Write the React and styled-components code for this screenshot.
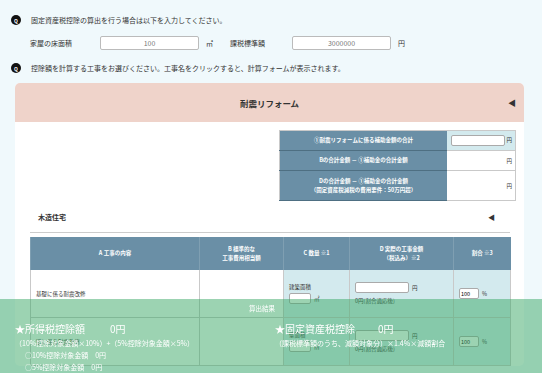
import React from "react";
import styled, { createGlobalStyle } from "styled-components";

const GlobalStyle = createGlobalStyle`
  body {
    margin: 0;
    background: #f0f9fc;
    font-family: "Noto Sans CJK JP", "Noto Sans", sans-serif;
    color: #333;
  }
`;

/**
 * Styling
 */

const Page = styled.div`
  padding: 15px 0 80px 0;
`;

const QuestionRow = styled.div`
  align-items: center;
  display: flex;
  font-size: 7px;
  gap: 10px;
  height: 10px;
  margin-left: 11px;
`;

const QIcon = styled.span`
  align-items: center;
  background: #111;
  border-radius: 50%;
  color: #fff;
  display: flex;
  font-size: 5px;
  font-weight: bold;
  height: 10px;
  justify-content: center;
  width: 10px;
`;

const InputRow = styled.div`
  align-items: center;
  display: flex;
  font-size: 7px;
  height: 14px;
  margin: 11px 0 13px 30px;
`;

const InputLabel = styled.span`
  width: ${(p) => p.width}px;
`;

const TopInput = styled.input`
  border: 1px solid #bbb;
  border-radius: 2px;
  box-sizing: border-box;
  color: #777;
  font-family: inherit;
  font-size: 7px;
  height: 14px;
  padding: 0;
  text-align: center;
  width: 99px;
`;

const Unit = styled.span`
  margin-left: ${(p) => p.gap || 3}px;
  width: ${(p) => p.width || "auto"};
`;

const Card = styled.div`
  background: #fff;
  border-radius: 5px;
  margin: 10px 18px 0 15px;
  overflow: hidden;
`;

const CardHeader = styled.div`
  align-items: center;
  background: #efd3ca;
  display: flex;
  font-size: 8.5px;
  font-weight: bold;
  height: 39px;
  justify-content: center;
  position: relative;
`;

const Arrow = styled.span`
  font-size: 8px;
  position: absolute;
  right: ${(p) => p.right}px;
`;

const CardBody = styled.div`
  padding: 8px 0 0 0;
`;

const SummaryTable = styled.table`
  border-collapse: collapse;
  border: 1px solid #c9c9c9;
  font-size: 5.5px;
  margin: 0 8px 0 auto;
  width: 237px;
`;

const SumHead = styled.th`
  background: #6a8fa6;
  border-bottom: 1px solid #4e6f82;
  color: #fff;
  font-weight: bold;
  height: ${(p) => p.h}px;
  line-height: 9px;
  padding: 0;
  text-align: center;
  width: 167px;
`;

const SumCell = styled.td`
  background: ${(p) => (p.tint ? "#d3eaee" : "#fff")};
  border-bottom: 1px solid #c9c9c9;
  padding: 0 3px;
  text-align: right;
  white-space: nowrap;
`;

const SmallInput = styled.input`
  border: 1px solid #aaa;
  border-radius: 2px;
  box-sizing: border-box;
  font-family: inherit;
  font-size: 5.5px;
  height: 11px;
  padding: 0 1px;
  vertical-align: middle;
  width: ${(p) => p.w}px;
`;

const SubHeader = styled.div`
  align-items: center;
  border-bottom: 1px solid #ccc;
  display: flex;
  font-size: 7px;
  font-weight: bold;
  height: 31px;
  margin: 0 14px 0 15px;
  padding: 0 15px 0 8px;
  justify-content: space-between;
`;

const WorkTable = styled.table`
  border-collapse: collapse;
  font-size: 5.5px;
  margin: 4px 14px 0 15px;
  table-layout: fixed;
  width: 480px;
`;

const HeadCell = styled.th`
  background: #6a8fa6;
  border-left: 1px solid #7f9fb2;
  color: #fff;
  font-weight: bold;
  height: 33px;
  line-height: 9px;
  padding: 0;
  text-align: center;
`;

const BodyCell = styled.td`
  background: ${(p) => (p.tint ? "#d3eaee" : "#fff")};
  border: 1px solid #c9c9c9;
  border-top: none;
  height: 47px;
  padding: 0 5px;
  text-align: ${(p) => p.align || "left"};
  vertical-align: middle;
`;

const CellLine = styled.div`
  align-items: center;
  display: flex;
  gap: 3px;
  margin-top: ${(p) => p.mt || 0}px;
`;

const ResultPanel = styled.div`
  background: rgba(58, 168, 102, 0.5);
  bottom: 0;
  color: #fff;
  height: 74px;
  left: 0;
  position: fixed;
  right: 0;
`;

const ResultTitle = styled.div`
  font-size: 6.5px;
  line-height: 9px;
  padding-top: 5px;
  text-align: center;
  width: 524px;
`;

const ResultColumns = styled.div`
  display: grid;
  grid-template-columns: 260px 1fr;
  margin: 9px 0 0 15px;
`;

const BigLine = styled.div`
  align-items: center;
  display: flex;
  font-size: 10px;
  height: 14px;
  line-height: 14px;
  margin-bottom: 1px;
`;

const BigLabel = styled.span`
  width: ${(p) => p.w}px;
`;

const Note = styled.div`
  font-size: 7px;
  height: 12px;
  line-height: 12px;
  margin-left: ${(p) => p.indent || 0}px;
  white-space: nowrap;
`;

function App() {
  return (
    <Page>
      <GlobalStyle />
      <QuestionRow>
        <QIcon>Q</QIcon>
        固定資産税控除の算出を行う場合は以下を入力してください。
      </QuestionRow>
      <InputRow>
        <InputLabel width={70}>家屋の床面積</InputLabel>
        <TopInput defaultValue="100" />
        <Unit gap={7} width="24px">㎡</Unit>
        <InputLabel width={62}>課税標準額</InputLabel>
        <TopInput defaultValue="3000000" />
        <Unit gap={7}>円</Unit>
      </InputRow>
      <QuestionRow>
        <QIcon>Q</QIcon>
        控除額を計算する工事をお選びください。工事名をクリックすると、計算フォームが表示されます。
      </QuestionRow>

      <Card>
        <CardHeader>
          耐震リフォーム
          <Arrow right={8}>◀</Arrow>
        </CardHeader>
        <CardBody>
          <SummaryTable>
            <tbody>
              <tr>
                <SumHead h={19}>①耐震リフォームに係る補助金額の合計</SumHead>
                <SumCell tint>
                  <SmallInput w={54} /> 円
                </SumCell>
              </tr>
              <tr>
                <SumHead h={19}>Bの合計金額 － ①補助金の合計金額</SumHead>
                <SumCell>円</SumCell>
              </tr>
              <tr>
                <SumHead h={29}>
                  Dの合計金額 － ①補助金の合計金額
                  <br />
                  （固定資産税減税の費用要件：50万円超）
                </SumHead>
                <SumCell>円</SumCell>
              </tr>
            </tbody>
          </SummaryTable>

          <SubHeader>
            木造住宅
            <span>◀</span>
          </SubHeader>

          <WorkTable>
            <colgroup>
              <col style={{ width: 169 }} />
              <col style={{ width: 84 }} />
              <col style={{ width: 66 }} />
              <col style={{ width: 104 }} />
              <col style={{ width: 57 }} />
            </colgroup>
            <thead>
              <tr>
                <HeadCell>A 工事の内容</HeadCell>
                <HeadCell>
                  B 標準的な
                  <br />
                  工事費用相当額
                </HeadCell>
                <HeadCell>C 数量 ※1</HeadCell>
                <HeadCell>
                  D 実際の工事金額
                  <br />
                  （税込み）※2
                </HeadCell>
                <HeadCell>割合 ※3</HeadCell>
              </tr>
            </thead>
            <tbody>
              <tr>
                <BodyCell>基礎に係る耐震改修</BodyCell>
                <BodyCell />
                <BodyCell tint>
                  <div>建築面積</div>
                  <CellLine mt={2}>
                    <SmallInput w={22} /> ㎡
                  </CellLine>
                </BodyCell>
                <BodyCell tint>
                  <CellLine>
                    <SmallInput w={54} /> 円
                  </CellLine>
                  <CellLine mt={4}>0円(割合適応後)</CellLine>
                </BodyCell>
                <BodyCell tint>
                  <CellLine>
                    <SmallInput w={20} defaultValue="100" /> %
                  </CellLine>
                </BodyCell>
              </tr>
              <tr>
                <BodyCell>壁に係る耐震改修</BodyCell>
                <BodyCell />
                <BodyCell tint>
                  <div>壁面積</div>
                  <CellLine mt={2}>
                    <SmallInput w={22} /> ㎡
                  </CellLine>
                </BodyCell>
                <BodyCell tint>
                  <CellLine>
                    <SmallInput w={54} /> 円
                  </CellLine>
                  <CellLine mt={4}>0円(割合適応後)</CellLine>
                </BodyCell>
                <BodyCell tint>
                  <CellLine>
                    <SmallInput w={20} defaultValue="100" /> %
                  </CellLine>
                </BodyCell>
              </tr>
            </tbody>
          </WorkTable>
        </CardBody>
      </Card>

      <ResultPanel>
        <ResultTitle>算出結果</ResultTitle>
        <ResultColumns>
          <div>
            <BigLine>
              <BigLabel w={95}>★所得税控除額</BigLabel>
              0円
            </BigLine>
            <Note>（10%控除対象金額×10%）+（5%控除対象金額×5%）</Note>
            <Note indent={10}>○10%控除対象金額　0円</Note>
            <Note indent={10}>○5%控除対象金額　0円</Note>
          </div>
          <div>
            <BigLine>
              <BigLabel w={103}>★固定資産税控除</BigLabel>
              0円
            </BigLine>
            <Note>（課税標準額のうち、減額対象分）×1.4%×減額割合</Note>
          </div>
        </ResultColumns>
      </ResultPanel>
    </Page>
  );
}

export default App;
